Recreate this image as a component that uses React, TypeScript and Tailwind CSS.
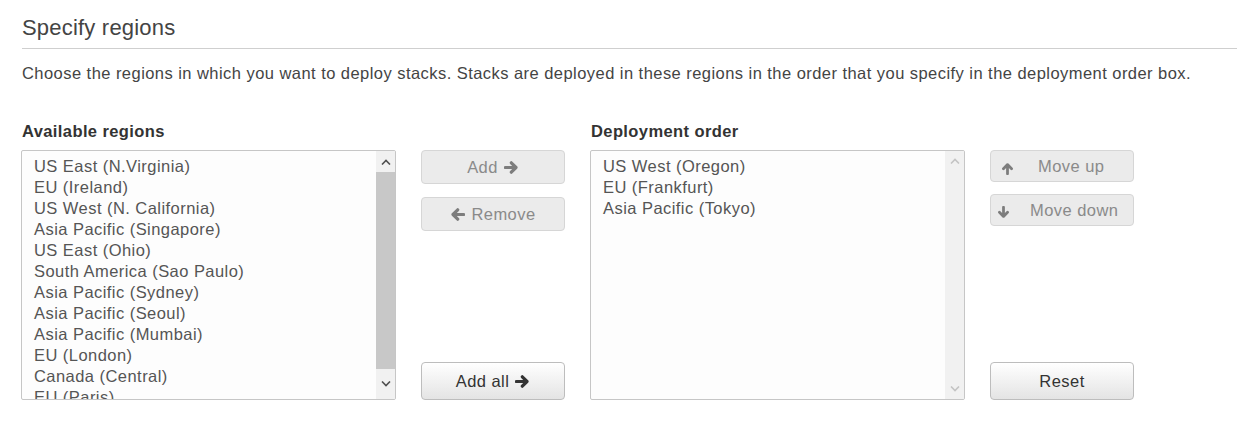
const available = [
  "US East (N.Virginia)",
  "EU (Ireland)",
  "US West (N. California)",
  "Asia Pacific (Singapore)",
  "US East (Ohio)",
  "South America (Sao Paulo)",
  "Asia Pacific (Sydney)",
  "Asia Pacific (Seoul)",
  "Asia Pacific (Mumbai)",
  "EU (London)",
  "Canada (Central)",
  "EU (Paris)",
];

const deployment = ["US West (Oregon)", "EU (Frankfurt)", "Asia Pacific (Tokyo)"];

// thick arrow, drawn pointing right; rotate for the other directions
function Arrow({ dir, className }: { dir: "right" | "left" | "up" | "down"; className?: string }) {
  const rot = { right: "", left: "rotate-180", up: "-rotate-90", down: "rotate-90" }[dir];
  return (
    <svg viewBox="0 0 16 16" className={`${rot} ${className ?? ""}`}>
      <path
        d="M1.5 8 H12.5 M7.8 3 L12.8 8 L7.8 13"
        fill="none"
        stroke="currentColor"
        strokeWidth="3.4"
        strokeLinejoin="round"
        strokeLinecap="round"
      />
    </svg>
  );
}

function Chevron({ up }: { up?: boolean }) {
  return (
    <svg width="10" height="6" viewBox="0 0 10 6">
      <path
        d={up ? "M1 5.5 L5 1.5 L9 5.5" : "M1 0.5 L5 4.5 L9 0.5"}
        fill="none"
        stroke="currentColor"
        strokeWidth="1.6"
      />
    </svg>
  );
}

function ListBox({ items, scrollable }: { items: string[]; scrollable: boolean }) {
  return (
    <div className="flex h-[250px] w-[375px] overflow-hidden rounded-[2px] border border-[#c6c6c6] bg-[#fdfdfd]">
      <ul className="flex-1 overflow-hidden pl-[12px] pt-[5px] text-[16.5px] leading-[21px] tracking-[0.45px] text-[#555]">
        {items.map((r) => (
          <li key={r} className="whitespace-nowrap">
            {r}
          </li>
        ))}
      </ul>
      {scrollable ? (
        <div className="flex w-[19px] flex-col bg-[#f1f1f1]">
          <div className="flex h-[21px] items-center justify-center text-[#505050]">
            <Chevron up />
          </div>
          <div className="h-[197px] bg-[#c8c8c8]" />
          <div className="flex flex-1 items-center justify-center text-[#505050]">
            <Chevron />
          </div>
        </div>
      ) : (
        <div className="flex w-[19px] flex-col justify-between bg-[#f1f1f1] py-[7px]">
          <div className="flex justify-center text-[#c4c4c4]">
            <Chevron up />
          </div>
          <div className="flex justify-center text-[#c4c4c4]">
            <Chevron />
          </div>
        </div>
      )}
    </div>
  );
}

const disabledBtn =
  "flex w-[144px] items-center rounded-[4px] border border-[#d6d6d6] bg-[#ebebeb] text-[16.5px] tracking-[0.45px] text-[#8a8a8a]";
const activeBtn =
  "flex h-[38px] w-[144px] items-center justify-center rounded-[4px] border border-[#bdbdbd] bg-gradient-to-b from-[#ffffff] to-[#e4e4e4] text-[16.5px] tracking-[0.45px] text-[#333]";

export default function App() {
  return (
    <div
      className="min-h-[442px] bg-white pl-[22px] pt-[14px] text-[#333]"
      style={{ fontFamily: '"Liberation Sans", Arial, sans-serif' }}
    >
      <h2 className="text-[22px] leading-[28px] tracking-[0.2px] text-[#444]">Specify regions</h2>
      <div className="mt-[6px] h-px bg-[#cfcfcf]" />
      <p className="mt-[13px] text-[16.5px] leading-[22px] tracking-[0.45px] text-[#444]">
        Choose the regions in which you want to deploy stacks. Stacks are deployed in these regions in
        the order that you specify in the deployment order box.
      </p>

      <div className="ml-[-1px] mt-[37px] flex">
        <div className="flex flex-col">
          <div className="mb-[9px] pl-[1px] text-[16.5px] font-bold leading-[20px] tracking-[0.4px] text-[#333]">
            Available regions
          </div>
          <ListBox items={available} scrollable />
        </div>

        <div className="ml-[25px] mt-[29px] flex h-[250px] flex-col">
          <button type="button" className={`${disabledBtn} h-[34px] justify-center gap-[6px]`}>
            <span>Add</span>
            <Arrow dir="right" className="h-[15px] w-[15px] text-[#7d7d7d]" />
          </button>
          <button type="button" className={`${disabledBtn} mt-[13px] h-[34px] justify-center gap-[6px]`}>
            <Arrow dir="left" className="h-[15px] w-[15px] text-[#7d7d7d]" />
            <span>Remove</span>
          </button>
          <div className="flex-1" />
          <button type="button" className={`${activeBtn} gap-[6px]`}>
            <span>Add all</span>
            <Arrow dir="right" className="h-[15px] w-[15px] text-[#333]" />
          </button>
        </div>

        <div className="ml-[25px] flex flex-col">
          <div className="mb-[9px] pl-[1px] text-[16.5px] font-bold leading-[20px] tracking-[0.4px] text-[#333]">
            Deployment order
          </div>
          <ListBox items={deployment} scrollable={false} />
        </div>

        <div className="ml-[25px] mt-[29px] flex h-[250px] flex-col">
          <button type="button" className={`${disabledBtn} h-[32px] pl-[10px]`}>
            <Arrow dir="up" className="mt-[5px] h-[13px] w-[13px] text-[#7d7d7d]" />
            <span className="ml-[24px]">Move up</span>
          </button>
          <button type="button" className={`${disabledBtn} mt-[12px] h-[32px] pl-[6px]`}>
            <Arrow dir="down" className="mt-[4px] h-[13px] w-[13px] text-[#7d7d7d]" />
            <span className="ml-[20px]">Move down</span>
          </button>
          <div className="flex-1" />
          <button type="button" className={activeBtn}>
            Reset
          </button>
        </div>
      </div>
    </div>
  );
}
